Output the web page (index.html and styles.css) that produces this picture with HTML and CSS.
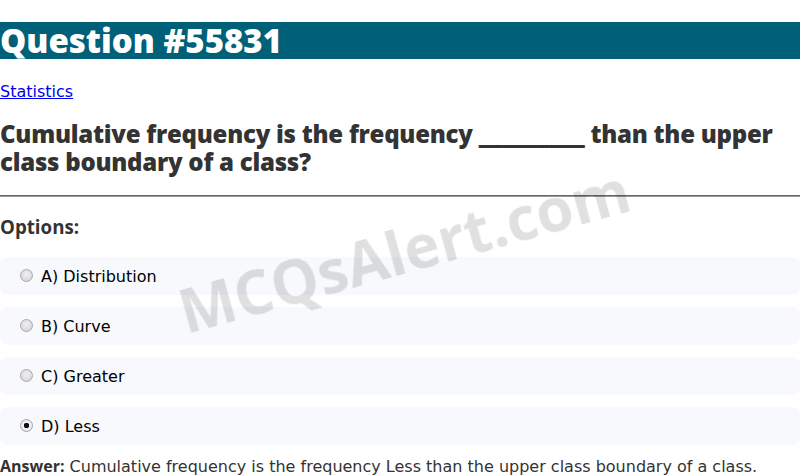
FILE: index.html
```html
<!DOCTYPE html>
<html>
<head>
<meta charset="utf-8">
<link rel="stylesheet" href="styles.css">
</head>
<body>
<h1 class="title">Question #55831</h1>
<div class="category"><a href="#">Statistics</a></div>
<h2 class="question">Cumulative frequency is the frequency _________ than the upper class boundary of a class?</h2>
<hr class="divider">
<h3 class="options-title">Options:</h3>
<div class="option"><label><input type="radio" name="opt"> A) Distribution</label></div>
<div class="option"><label><input type="radio" name="opt"> B) Curve</label></div>
<div class="option"><label><input type="radio" name="opt"> C) Greater</label></div>
<div class="option"><label><input type="radio" name="opt" checked> D) Less</label></div>
<p class="answer"><strong>Answer:</strong> Cumulative frequency is the frequency Less than the upper class boundary of a class.</p>
<div class="watermark">MCQsAlert.com</div>
</body>
</html>
```
FILE: styles.css
```css
body {
  margin: 0;
  font-family: "DejaVu Sans", sans-serif;
  color: #333;
  background: #fff;
}
.title {
  margin: 22px 0 24px;
  background: #006078;
  color: #fff;
  font-family: "Open Sans", sans-serif;
  font-size: 33px;
  font-weight: 800;
  line-height: 37px;
}
.category {
  font-size: 16px;
  line-height: 18px;
}
.category a {
  color: #0000ee;
}
.question {
  font-family: "Open Sans", sans-serif;
  font-size: 24px;
  font-weight: 800;
  letter-spacing: -0.25px;
  margin: 19px 0;
  line-height: 28px;
  color: #333;
}
.divider {
  margin: 0;
  border: 0;
  border-top: 1px solid #666;
  border-bottom: 1px solid #999;
}
.options-title {
  font-family: "Open Sans", sans-serif;
  font-size: 18.72px;
  font-weight: 700;
  line-height: 22px;
  margin: 19px 0 19px;
  color: #333;
}
.option {
  background: #f8f9fc;
  border-radius: 8px;
  padding: 11px 15px 9px;
  margin-bottom: 12px;
  font-size: 16px;
  color: #000;
  line-height: 18px;
}
.option label {
  display: flex;
  align-items: center;
}
.option input {
  appearance: none;
  -webkit-appearance: none;
  width: 13px;
  height: 13px;
  margin: -3px 8px 0 5px;
  border: 1px solid #a8a8a8;
  border-radius: 50%;
  background: radial-gradient(circle at 50% 40%, #f0f0f0, #d0d0d0);
  box-sizing: border-box;
}
.option input:checked {
  background: radial-gradient(circle, #111 0, #111 2.5px, #f2f2f2 3px, #e0e0e0 100%);
}
.answer {
  margin: 0;
  font-size: 16px;
  line-height: 18px;
  color: #333;
}
.answer strong {
  font-family: "Open Sans", sans-serif;
  font-weight: 700;
  color: #333;
}
.watermark {
  position: fixed;
  left: 404px;
  top: 250px;
  transform: translate(-50%, -50%) rotate(-15.5deg);
  font-family: "Open Sans", sans-serif;
  font-size: 60px;
  font-weight: 700;
  color: rgba(0, 0, 0, 0.12);
  white-space: nowrap;
  pointer-events: none;
}
```
